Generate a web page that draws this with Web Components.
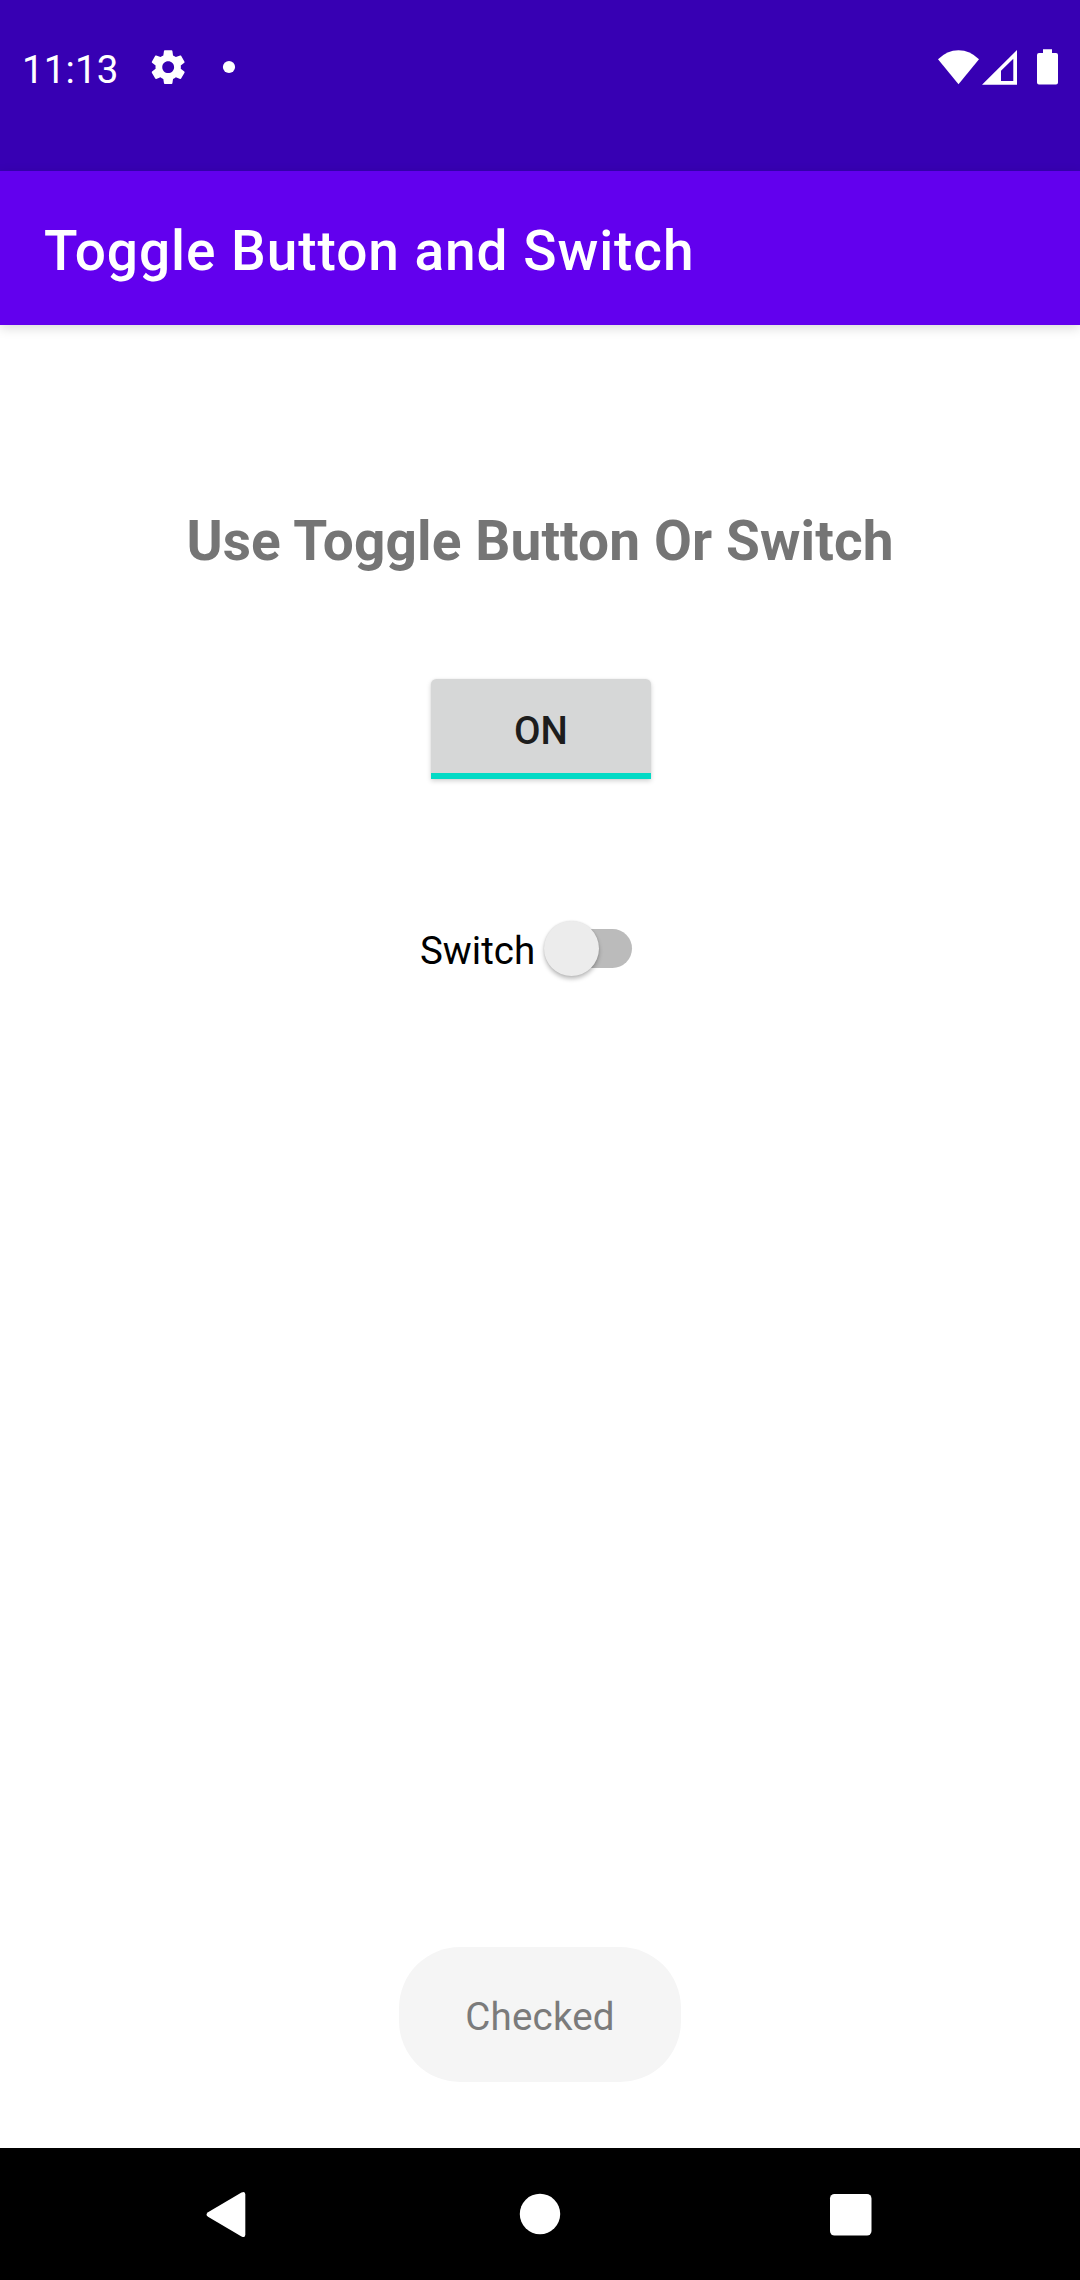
<!DOCTYPE html>
<html lang="en">
<head>
<meta charset="utf-8">
<title>Toggle Button and Switch</title>
<style>
html, body { margin: 0; background: #fff; }
body { font-family: Roboto, "Liberation Sans", sans-serif; }
</style>
</head>
<body>
<toggle-app></toggle-app>
<script>
function define(name, html) {
  const template = document.createElement('template');
  template.innerHTML = html;
  customElements.define(name, class extends HTMLElement {
    constructor() {
      super();
      this.attachShadow({ mode: 'open' }).appendChild(template.content.cloneNode(true));
    }
  });
}

define('status-bar', `
<style>
:host { display: flex; box-sizing: border-box; height: 171px; padding: 47px 0 0 22px; background: #3700b3; color: #fff; align-items: flex-start; justify-content: space-between; }
.left { display: flex; align-items: center; height: 40px; }
.time { width: 126px; font-size: 38.5px; line-height: 46px; padding-top: 5px; letter-spacing: 0.1px; white-space: nowrap; }
svg { display: block; fill: #fff; }
</style>
<div class="left">
  <span class="time">11:13</span>
  <svg width="90" height="40" viewBox="148 47 90 40">
    <path transform="translate(147.9 46.9) scale(1.69)" d="M19.43 12.98c.04-.32.07-.64.07-.98s-.03-.66-.07-.98l2.11-1.65c.19-.15.24-.42.12-.64l-2-3.46c-.12-.22-.39-.3-.61-.22l-2.49 1c-.52-.4-1.08-.73-1.69-.98l-.38-2.65C14.46 2.18 14.25 2 14 2h-4c-.25 0-.46.18-.49.42l-.38 2.65c-.61.25-1.17.59-1.69.98l-2.49-1c-.23-.09-.49 0-.61.22l-2 3.46c-.13.22-.07.49.12.64l2.11 1.65c-.04.32-.07.65-.07.98s.03.66.07.98l-2.11 1.65c-.19.15-.24.42-.12.64l2 3.46c.12.22.39.3.61.22l2.49-1c.52.4 1.08.73 1.69.98l.38 2.65c.03.24.24.42.49.42h4c.25 0 .46-.18.49-.42l.38-2.65c.61-.25 1.17-.59 1.69-.98l2.49 1c.23.09.49 0 .61-.22l2-3.46c.12-.22.07-.49-.12-.64l-2.11-1.65zM12 15.5c-1.93 0-3.5-1.57-3.5-3.5s1.57-3.5 3.5-3.5 3.5 1.57 3.5 3.5-1.57 3.5-3.5 3.5z"/>
    <circle cx="229" cy="67" r="6.1"/>
  </svg>
</div>
<svg width="145" height="40" viewBox="935 47 145 40">
  <path d="M958.5 84.3 938 59.3Q947 50.2 958.5 50.2T979 59.3Z"/>
  <path fill-rule="evenodd" d="M982 84.8 1017 50V84.8ZM1001 70.8V81H1013.3V58.8Z"/>
  <path d="M1043 49.3H1052V53H1056Q1058 53 1058 55V82.5Q1058 84.5 1056 84.5H1039Q1037 84.5 1037 82.5V55Q1037 53 1039 53H1043Z"/>
</svg>`);

define('app-bar', `
<style>
:host { display: flex; box-sizing: border-box; height: 154px; padding: 6px 44px 0; align-items: center; background: #6200ee; color: #fff; font-size: 55px; line-height: 64px; font-weight: 500; letter-spacing: 0.94px; white-space: nowrap; box-shadow: 0 3px 11px rgba(0,0,0,.15); position: relative; }
</style>
<slot></slot>`);

define('page-heading', `
<style>
:host { display: block; color: #757575; font-size: 55px; line-height: 64px; font-weight: 700; letter-spacing: 0.11px; white-space: nowrap; }
</style>
<slot></slot>`);

define('toggle-button', `
<style>
:host { display: flex; box-sizing: border-box; width: 220px; height: 100px; padding-top: 9px; align-items: center; justify-content: center; background: #d6d7d7; border-bottom: 6px solid #03dac5; border-radius: 5.5px 5.5px 0 0; box-shadow: 0 2px 5px rgba(0,0,0,.18), 0 0 2px rgba(0,0,0,.06); color: #1d1d1d; font-size: 38.5px; line-height: 46px; font-weight: 500; letter-spacing: 0.2px; }
</style>
<slot></slot>`);

define('switch-control', `
<style>
:host { display: flex; align-items: center; height: 55px; color: #000; font-size: 38.5px; line-height: 46px; }
.label { width: 124px; padding-top: 5px; white-space: nowrap; }
.track { display: flex; align-items: center; width: 73px; height: 39px; margin-left: 15px; border-radius: 20px; background: #bbb; }
.thumb { flex: none; width: 55px; height: 55px; margin-left: -15px; border-radius: 50%; background: #ececec; box-shadow: 0 3px 4px rgba(0,0,0,.25), 0 0 2px rgba(0,0,0,.12); }
</style>
<span class="label"><slot></slot></span>
<div class="track"><div class="thumb"></div></div>`);

define('toast-message', `
<style>
:host { display: flex; box-sizing: border-box; width: 282px; height: 135px; padding-top: 5px; align-items: center; justify-content: center; border-radius: 61px; background: #f5f5f5; color: #7b7b7b; font-size: 38.5px; line-height: 46px; letter-spacing: 0.2px; }
</style>
<slot></slot>`);

define('navigation-bar', `
<style>
:host { display: flex; height: 132px; align-items: center; justify-content: center; background: #000; }
svg { display: block; fill: #fff; }
</style>
<svg width="720" height="132" viewBox="180 2148 720 132">
  <path d="M241.5 2192.6Q245.3 2190.5 245.3 2194.5V2234.5Q245.3 2238.5 241.5 2236.4L208 2216.8Q205 2214.5 208 2212.2Z"/>
  <circle cx="540" cy="2214" r="20.2"/>
  <rect x="830" y="2194" width="41.5" height="41.5" rx="4.5"/>
</svg>`);

define('toggle-app', `
<style>
:host { display: flex; flex-direction: column; width: 1080px; height: 2280px; overflow: hidden; background: #fff; }
main { flex: 1; display: flex; flex-direction: column; align-items: center; }
page-heading { margin-top: 184px; }
toggle-button { margin: 106px 0 0 2px; }
switch-control { margin: 142px 28px 0 0; }
toast-message { margin-top: auto; margin-bottom: 66px; }
</style>
<status-bar></status-bar>
<app-bar>Toggle Button and Switch</app-bar>
<main>
  <page-heading>Use Toggle Button Or Switch</page-heading>
  <toggle-button>ON</toggle-button>
  <switch-control>Switch</switch-control>
  <toast-message>Checked</toast-message>
</main>
<navigation-bar></navigation-bar>`);
</script>
</body>
</html>
